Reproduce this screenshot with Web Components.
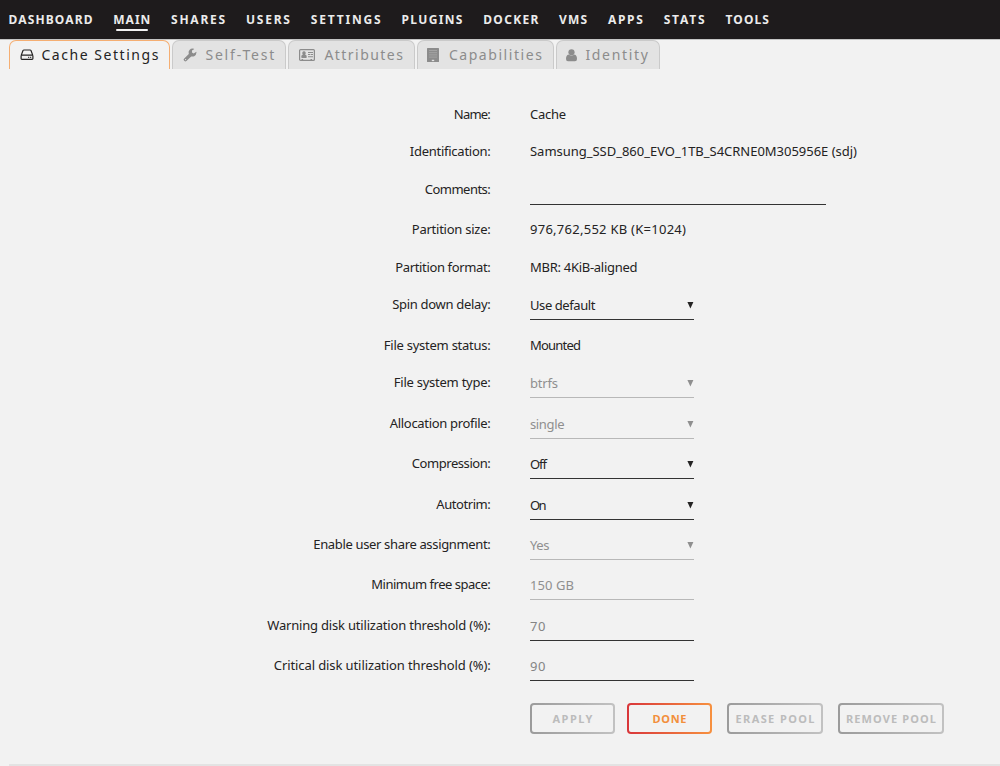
<!DOCTYPE html>
<html lang="en">
<head>
<meta charset="utf-8">
<title>Main/Settings</title>
<style>
    body {
        margin: 0;
        background: #f2f2f2;
        color: #242323;
        font-family: "Noto Sans", "Open Sans", sans-serif;
        font-size: 13px;
    }
</style>
</head>
<body>
<device-page></device-page>
<script>
// Single line of text that is tracked out to a given width
class FitText extends HTMLElement {
    constructor() {
        super();
        this.root = this.attachShadow({ mode: "open" });
    }

    connectedCallback() {
        this.root.innerHTML = `
            <style>
                :host {
                    display: block;
                    white-space: nowrap;
                    line-height: 20px;
                }
                span {
                    display: inline-block;
                }
            </style>
            <span><slot></slot></span>
        `;
        const width = parseFloat(this.getAttribute("width"));
        const $span = this.root.querySelector("span");
        const letters = this.textContent.length;
        $span.style.letterSpacing = "0px";
        const natural = $span.getBoundingClientRect().width;
        $span.style.letterSpacing = ((width - natural) / (letters - 1)).toFixed(3) + "px";
        this.style.width = width + "px";
    }
}

class NavBar extends HTMLElement {
    constructor() {
        super();
        this.root = this.attachShadow({ mode: "open" });
        this.items = [
            ["DASHBOARD", 84], ["MAIN", 37], ["SHARES", 54], ["USERS", 44],
            ["SETTINGS", 70], ["PLUGINS", 61], ["DOCKER", 55], ["VMS", 28],
            ["APPS", 35], ["STATS", 41], ["TOOLS", 43.5]
        ];
    }

    connectedCallback() {
        this.root.innerHTML = `
            <style>
                :host {
                    display: block;
                    height: 39px;
                    background: #1e1b1c;
                    border-bottom: 1px solid #c4c4c4;
                    color: #ebebeb;
                    font-size: 12px;
                    font-weight: 700;
                }
                nav {
                    display: flex;
                    gap: 20.8px;
                    padding: 10px 0 0 8.5px;
                }
                .active::after {
                    content: "";
                    display: block;
                    height: 2px;
                    margin: -1px 2px 0 3px;
                    border-radius: 1px;
                    background: #f2f2f2;
                }
            </style>
            <nav>
                ${this.items.map(([name, width]) => `
                    <div class="${name === "MAIN" ? "active" : ""}"><fit-text width="${width}">${name}</fit-text></div>
                `).join("")}
            </nav>
        `;
    }
}

const ICONS = {
    hdd: `<svg width="14" height="12" viewBox="0 0 14 12" fill="none" stroke="currentColor" stroke-width="1.2"><path d="M1.1 6.6 3 1.6Q3.3 1 4 1h6q.7 0 1 .6l1.9 5M1.9 6.1h10.2q.8 0 .8.8v2.7q0 .8-.8.8H1.9q-.8 0-.8-.8V6.9q0-.8.8-.8z"/><path d="M8.2 8.3h1M10.2 8.3h1"/></svg>`,
    wrench: `<svg width="14" height="14" viewBox="0 0 14 14" fill="currentColor"><path d="M8.2 8.4 3.4 13q-1 .9-1.9 0l-.5-.5q-.9-.9 0-1.8l4.8-4.8Q5 3.5 6.5 1.9 8.2.1 10.9.7q.5.2.1.5L9 2.6v1.8l1.7 1 2.3-1.5q.5-.2.5.3-.2 3-2.3 4-1.6.7-3 .2zM2.6 10.9a.65.65 0 1 0 .01 1.3.65.65 0 0 0-.01-1.3z" fill-rule="evenodd"/></svg>`,
    card: `<svg width="16" height="12" viewBox="0 0 16 12"><rect x=".6" y=".6" width="14.8" height="10.8" rx="1" fill="none" stroke="currentColor" stroke-width="1.2"/><path fill="currentColor" d="M5 2.3a1.8 1.8 0 0 1 1.1 3.2q1.7.3 1.7 2.6 0 .9-.9.9H3.1q-.9 0-.9-.9 0-2.3 1.7-2.6A1.8 1.8 0 0 1 5 2.300zM9 3h5v1H9zM9 5h2.2v1H9zM11.8 5H14v1h-2.2zM9 7.2h5v1H9zM2.6 10h1.5v1.300H2.6zM11.5 10H13v1.300h-1.5z"/></svg>`,
    building: `<svg width="12" height="14" viewBox="0 0 12 14"><path fill="currentColor" d="M.5 0h11q.5 0 .5.5v13q0 .5-.5.5H.5q-.5 0-.5-.5V.5Q0 0 .5 0z"/><path fill="#e3e3e3" d="M4.8 11.8h2.4v1.300H4.8z"/><path stroke="#a9a9a9" stroke-width=".8" d="M2 2.500h8M2 4.700h8M2 6.900h8M2 9.100h8"/></svg>`,
    user: `<svg width="11" height="13" viewBox="0 0 11 13" fill="currentColor"><circle cx="5.5" cy="3.3" r="3.1"/><path d="M2.5 5.5q3 2.3 6 0Q11 6 11 10q0 2.2-2 2.2H2Q0 12.2 0 10q0-4 2.5-4.5z"/></svg>`
};

class TabItem extends HTMLElement {
    constructor() {
        super();
        this.root = this.attachShadow({ mode: "open" });
    }

    connectedCallback() {
        this.root.innerHTML = `
            <style>
                :host {
                    display: flex;
                    box-sizing: border-box;
                    height: 29px;
                    align-items: center;
                    border: 1.5px solid #cacaca;
                    border-bottom: none;
                    border-radius: 7px 7px 0 0;
                    background: #e3e3e3;
                    color: #8c8c8c;
                    font-size: 14px;
                }
                :host([active]) {
                    border-color: #f5ae72;
                    background: #f2f2f2;
                    color: #242323;
                }
                .icon {
                    display: flex;
                    align-items: center;
                    flex: none;
                    box-sizing: border-box;
                    width: var(--text-start);
                    padding-left: 9.5px;
                }
            </style>
            <div class="icon">${ICONS[this.getAttribute("icon")]}</div>
            <slot></slot>
        `;
    }
}

// Label on the left, its value or control on the right
class SettingRow extends HTMLElement {
    constructor() {
        super();
        this.root = this.attachShadow({ mode: "open" });
    }

    connectedCallback() {
        this.root.innerHTML = `
            <style>
                :host {
                    display: grid;
                    grid-template-columns: 490.8px 1fr;
                    column-gap: 39.2px;
                    height: 37.6px;
                }
                :host([control]) {
                    height: 40.4px;
                }
                .label {
                    display: flex;
                    justify-content: flex-end;
                    padding-top: 5px;
                }
                ::slotted(fit-text) {
                    padding-top: 5px;
                }
            </style>
            <div class="label"><fit-text width="${this.getAttribute("label-width")}">${this.getAttribute("label")}</fit-text></div>
            <slot></slot>
        `;
    }
}

class SettingField extends HTMLElement {
    constructor() {
        super();
        this.root = this.attachShadow({ mode: "open" });
    }

    connectedCallback() {
        const arrow = this.hasAttribute("select")
            ? `<svg width="8" height="8" viewBox="0 0 8 8"><path fill="currentColor" d="M1.4 1h6L4.4 7.4z"/></svg>`
            : "";
        this.root.innerHTML = `
            <style>
                :host {
                    display: flex;
                    justify-content: space-between;
                    box-sizing: border-box;
                    width: 164px;
                    height: 31px;
                    padding-top: 6px;
                    border-bottom: 1px solid #333;
                }
                :host([wide]) {
                    width: 296.5px;
                }
                :host([placeholder]) {
                    color: #858585;
                }
                :host([disabled]) {
                    color: #8f8f8f;
                    border-color: #b8b8b8;
                }
                svg {
                    margin-top: 6px;
                }
            </style>
            <slot></slot>
            ${arrow}
        `;
    }
}

class PushButton extends HTMLElement {
    constructor() {
        super();
        this.root = this.attachShadow({ mode: "open" });
    }

    connectedCallback() {
        this.root.innerHTML = `
            <style>
                :host {
                    display: block;
                    --from: #9b9b9b;
                    --to: #c2c2c2;
                    color: #bcbcbc;
                    font-size: 11px;
                    font-weight: 700;
                }
                :host([primary]) {
                    --from: #d9363a;
                    --to: #f7913f;
                    color: #f28f3b;
                }
                button {
                    display: flex;
                    justify-content: center;
                    align-items: center;
                    box-sizing: border-box;
                    width: 100%;
                    height: 31px;
                    padding: 1px 0 0;
                    border: 2px solid transparent;
                    border-radius: 4px;
                    background: linear-gradient(#f2f2f2, #f2f2f2) padding-box,
                                linear-gradient(90deg, var(--from), var(--to)) border-box;
                    color: inherit;
                    font: inherit;
                }
            </style>
            <button type="button"><slot></slot></button>
        `;
    }
}

class DevicePage extends HTMLElement {
    constructor() {
        super();
        this.root = this.attachShadow({ mode: "open" });
    }

    connectedCallback() {
        this.root.innerHTML = `
            <style>
                :host {
                    display: flex;
                    flex-direction: column;
                    height: 766px;
                    overflow: hidden;
                }
                .tabs {
                    display: flex;
                    gap: 2px;
                    padding-left: 9px;
                }
                .settings {
                    padding-top: 29.6px;
                }
                .buttons {
                    display: flex;
                    padding: 12.8px 0 0 530px;
                }
                footer {
                    height: 2px;
                    margin: auto 0 0 9px;
                    background: #e3e3e3;
                }
            </style>
            <nav-bar></nav-bar>
            <div class="tabs">
                <tab-item active icon="hdd" style="width: 161.4px; --text-start: 31.4px"><fit-text width="117">Cache Settings</fit-text></tab-item>
                <tab-item icon="wrench" style="width: 114px; --text-start: 32px"><fit-text width="69">Self-Test</fit-text></tab-item>
                <tab-item icon="card" style="width: 126.5px; --text-start: 35px"><fit-text width="78.5">Attributes</fit-text></tab-item>
                <tab-item icon="building" style="width: 137px; --text-start: 31px"><fit-text width="93">Capabilities</fit-text></tab-item>
                <tab-item icon="user" style="width: 104px; --text-start: 28.5px"><fit-text width="62.5">Identity</fit-text></tab-item>
            </div>
            <div class="settings">
                <setting-row label="Name:" label-width="37"><fit-text width="36">Cache</fit-text></setting-row>
                <setting-row label="Identification:" label-width="81"><fit-text width="327">Samsung_SSD_860_EVO_1TB_S4CRNE0M305956E (sdj)</fit-text></setting-row>
                <setting-row control label="Comments:" label-width="66"><setting-field wide></setting-field></setting-row>
                <setting-row label="Partition size:" label-width="79"><fit-text width="156">976,762,552 KB (K=1024)</fit-text></setting-row>
                <setting-row label="Partition format:" label-width="95.5"><fit-text width="107.5">MBR: 4KiB-aligned</fit-text></setting-row>
                <setting-row control label="Spin down delay:" label-width="98.5"><setting-field select><fit-text width="65.5">Use default</fit-text></setting-field></setting-row>
                <setting-row label="File system status:" label-width="107"><fit-text width="51">Mounted</fit-text></setting-row>
                <setting-row control label="File system type:" label-width="97"><setting-field select disabled><fit-text width="28">btrfs</fit-text></setting-field></setting-row>
                <setting-row control label="Allocation profile:" label-width="101"><setting-field select disabled><fit-text width="34.5">single</fit-text></setting-field></setting-row>
                <setting-row control label="Compression:" label-width="79"><setting-field select><fit-text width="17">Off</fit-text></setting-field></setting-row>
                <setting-row control label="Autotrim:" label-width="54.5"><setting-field select><fit-text width="16.5">On</fit-text></setting-field></setting-row>
                <setting-row control label="Enable user share assignment:" label-width="177.5"><setting-field select disabled><fit-text width="19.5">Yes</fit-text></setting-field></setting-row>
                <setting-row control label="Minimum free space:" label-width="119.5"><setting-field disabled><fit-text width="44">150 GB</fit-text></setting-field></setting-row>
                <setting-row control label="Warning disk utilization threshold (%):" label-width="223.5"><setting-field placeholder><fit-text width="15.5">70</fit-text></setting-field></setting-row>
                <setting-row control label="Critical disk utilization threshold (%):" label-width="217"><setting-field placeholder><fit-text width="15.5">90</fit-text></setting-field></setting-row>
            </div>
            <div class="buttons">
                <push-button style="width: 85px"><fit-text width="40">APPLY</fit-text></push-button>
                <push-button primary style="width: 85px; margin-left: 12px"><fit-text width="34">DONE</fit-text></push-button>
                <push-button style="width: 96px; margin-left: 15px"><fit-text width="79">ERASE POOL</fit-text></push-button>
                <push-button style="width: 106px; margin-left: 15px"><fit-text width="90">REMOVE POOL</fit-text></push-button>
            </div>
            <footer></footer>
        `;
    }
}

window.customElements.define("fit-text", FitText);
window.customElements.define("nav-bar", NavBar);
window.customElements.define("tab-item", TabItem);
window.customElements.define("setting-row", SettingRow);
window.customElements.define("setting-field", SettingField);
window.customElements.define("push-button", PushButton);
window.customElements.define("device-page", DevicePage);
</script>
</body>
</html>
